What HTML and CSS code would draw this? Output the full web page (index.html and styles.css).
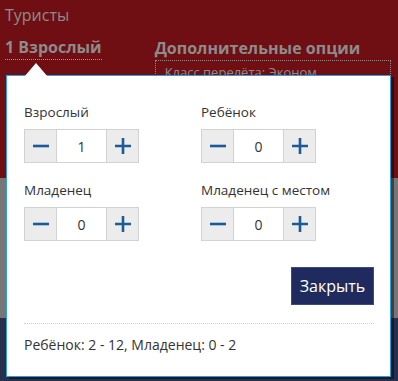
FILE: index.html
```html
<!DOCTYPE html>
<html lang="ru">

<head>
  <meta charset="UTF-8">
  <meta name="viewport" content="width=device-width, initial-scale=1.0">
  <title>Туристы</title>
  <link rel="stylesheet" href="styles.css">
</head>

<body>
  <!-- Search form header -->
  <div class="tourists">
    <div class="tourists-title">Туристы</div>
    <div class="tabs">
      <span class="tab tab-pax">1 Взрослый</span>
      <div class="tab-extra">
        <span class="tab">Дополнительные опции</span>
        <div class="extra-box">Класс перелёта: Эконом</div>
      </div>
    </div>
  </div>

  <!-- Passengers popup -->
  <div class="pax-popup">
    <div class="pax-grid">
      <div class="pax-item">
        <div class="pax-label">Взрослый</div>
        <div class="stepper">
          <button class="step-btn"><svg width="18" height="18" viewBox="0 0 18 18"><path d="M1 9h16" /></svg></button>
          <input class="step-val" type="text" value="1">
          <button class="step-btn"><svg width="18" height="18" viewBox="0 0 18 18"><path d="M1 9h16M9 1v16" /></svg></button>
        </div>
      </div>
      <div class="pax-item">
        <div class="pax-label">Ребёнок</div>
        <div class="stepper">
          <button class="step-btn"><svg width="18" height="18" viewBox="0 0 18 18"><path d="M1 9h16" /></svg></button>
          <input class="step-val" type="text" value="0">
          <button class="step-btn"><svg width="18" height="18" viewBox="0 0 18 18"><path d="M1 9h16M9 1v16" /></svg></button>
        </div>
      </div>
      <div class="pax-item">
        <div class="pax-label">Младенец</div>
        <div class="stepper">
          <button class="step-btn"><svg width="18" height="18" viewBox="0 0 18 18"><path d="M1 9h16" /></svg></button>
          <input class="step-val" type="text" value="0">
          <button class="step-btn"><svg width="18" height="18" viewBox="0 0 18 18"><path d="M1 9h16M9 1v16" /></svg></button>
        </div>
      </div>
      <div class="pax-item">
        <div class="pax-label">Младенец с местом</div>
        <div class="stepper">
          <button class="step-btn"><svg width="18" height="18" viewBox="0 0 18 18"><path d="M1 9h16" /></svg></button>
          <input class="step-val" type="text" value="0">
          <button class="step-btn"><svg width="18" height="18" viewBox="0 0 18 18"><path d="M1 9h16M9 1v16" /></svg></button>
        </div>
      </div>
    </div>
    <div class="pax-actions">
      <button class="close-btn">Закрыть</button>
    </div>
    <div class="pax-note">Ребёнок: 2 - 12, Младенец: 0 - 2</div>
  </div>
</body>

</html>
```

FILE: styles.css
```css
body {
  margin: 0;
  width: 398px;
  height: 381px;
  overflow: hidden;
  position: relative;
  font-family: "Open Sans", "DejaVu Sans", sans-serif;
  background: linear-gradient(to bottom, #6f0f13 0, #6f0f13 178px, #767676 178px, #767676 318px, #26304d 318px);
}

.tourists {
  background: #6f0f13;
  height: 178px;
  padding: 4px 0 0 5px;
  box-sizing: border-box;
  color: #8c8c8c;
}

.tourists-title {
  font-size: 16px;
  line-height: 22px;
}

.tabs {
  display: flex;
  gap: 53px;
  margin-top: 11px;
}

.tab {
  font-size: 16px;
  font-weight: bold;
  line-height: 21px;
}

.tab-pax {
  border-bottom: 1px dotted #9a9a9a;
  height: 22px;
}

.tab-extra {
  flex: 1;
}

.extra-box {
  margin-top: 1px;
  margin-right: 7px;
  border: 1px dotted #8c8c8c;
  padding: 2px 9px;
  font-size: 13px;
  line-height: 18px;
}

/* popup */
.pax-popup {
  position: absolute;
  left: 6px;
  top: 75px;
  width: 385px;
  height: 302px;
  box-sizing: border-box;
  background: #fff;
  border: 1px solid #2a9fe0;
  box-shadow: 3px 2px 0 rgba(0, 0, 0, 0.45);
  padding: 28px 16px 0 17px;
  color: #333;
}

.pax-popup::before {
  content: "";
  position: absolute;
  left: 17px;
  top: -13px;
  border-left: 12px solid transparent;
  border-right: 12px solid transparent;
  border-bottom: 14px solid #fff;
}

.pax-grid {
  display: grid;
  grid-template-columns: 177px 1fr;
  row-gap: 19px;
}

.pax-label {
  font-size: 13.5px;
  line-height: 17px;
  margin-bottom: 8px;
}

.stepper {
  display: flex;
  width: max-content;
  border: 1px solid #d2d2d2;
  height: 34px;
  box-sizing: border-box;
}

.step-btn {
  width: 31px;
  padding: 0;
  border: none;
  background: #ececec;
  display: flex;
  align-items: center;
  justify-content: center;
  cursor: pointer;
}

.step-btn svg {
  fill: none;
  stroke: #1c5a98;
  stroke-width: 2.6;
}

.step-val {
  width: 49px;
  border: none;
  border-left: 1px solid #d2d2d2;
  border-right: 1px solid #d2d2d2;
  padding: 0;
  text-align: center;
  font-family: inherit;
  font-size: 14px;
  color: #333;
  outline: none;
}

.pax-actions {
  display: flex;
  justify-content: flex-end;
  margin-top: 26px;
  padding-bottom: 18px;
  border-bottom: 1px dotted #cfcfcf;
}

.close-btn {
  width: 83px;
  height: 38px;
  border: 1px solid #3d4a7a;
  background: #1f2b5e;
  color: #fff;
  font-family: inherit;
  font-size: 16px;
  cursor: pointer;
}

.pax-note {
  font-size: 14px;
  line-height: 18px;
  margin-top: 12px;
}
```
